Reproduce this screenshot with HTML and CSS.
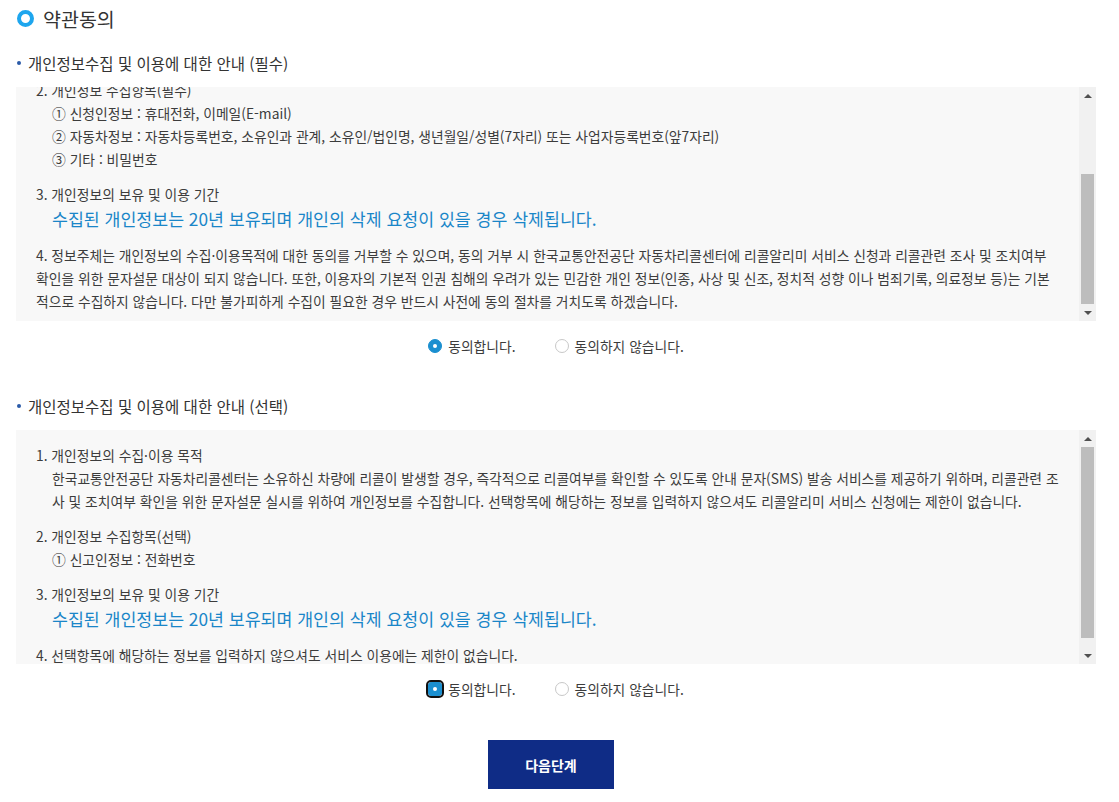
FILE: index.html
```html
<!DOCTYPE html>
<html lang="ko">
<head>
  <meta charset="UTF-8" />
  <meta name="viewport" content="width=device-width, initial-scale=1.0"/>
  <title>약관동의</title>
  <link rel="stylesheet" href="styles.css">
</head>
<body>

  <div class="page">
    <h2 class="page-title"><span class="title-icon"></span>약관동의</h2>

    <h3 class="section-head">개인정보수집 및 이용에 대한 안내 (필수)</h3>
    <div class="terms-box">
      <div class="terms-scroll" id="terms1" data-scroll="end">
        <div class="term-item">
          <p class="term-title">1. 개인정보의 수집·이용 목적</p>
          <p class="term-desc">한국교통안전공단 자동차리콜센터는 리콜알리미 서비스 신청자에게 소유하신 차량에 리콜이 발생할 경우, 즉각적으로 리콜여부를 확인할 수 있도록 안내 문자(SMS) 발송 서비스를 제공하고, 리콜관련 조사 및 조치여부 확인을 위한 문자설문 실시를 위하여 개인정보를 수집합니다. 수집된 개인정보는 위 목적 이외의 용도로는 이용되지 않으며, 이용 목적이 변경될 경우에는 사전에 동의를 구할 예정입니다. 또한 신청인의 본인 확인 및 서비스 이용 내역 관리, 민원 처리 등을 위하여 필요한 최소한의 정보만을 수집합니다.</p>
        </div>
        <div class="term-item">
          <p class="term-title">2. 개인정보 수집항목(필수)</p>
          <p class="term-desc">① 신청인정보 : 휴대전화, 이메일(E-mail)</p>
          <p class="term-desc">② 자동차정보 : 자동차등록번호, 소유인과 관계, 소유인/법인명, 생년월일/성별(7자리) 또는 사업자등록번호(앞7자리)</p>
          <p class="term-desc">③ 기타 : 비밀번호</p>
        </div>
        <div class="term-item">
          <p class="term-title">3. 개인정보의 보유 및 이용 기간</p>
          <p class="term-desc term-point">수집된 개인정보는 20년 보유되며 개인의 삭제 요청이 있을 경우 삭제됩니다.</p>
        </div>
        <div class="term-item">
          <p class="term-title term-narrow">4. 정보주체는 개인정보의 수집·이용목적에 대한 동의를 거부할 수 있으며, 동의 거부 시 한국교통안전공단 자동차리콜센터에 리콜알리미 서비스 신청과 리콜관련 조사 및 조치여부 확인을 위한 문자설문 대상이 되지 않습니다. 또한, 이용자의 기본적 인권 침해의 우려가 있는 민감한 개인 정보(인종, 사상 및 신조, 정치적 성향 이나 범죄기록, 의료정보 등)는 기본적으로 수집하지 않습니다. 다만 불가피하게 수집이 필요한 경우 반드시 사전에 동의 절차를 거치도록 하겠습니다.</p>
        </div>
      </div>
      <div class="scrollbar">
        <span class="scroll-btn up"></span>
        <div class="scroll-track"><div class="scroll-thumb"></div></div>
        <span class="scroll-btn down"></span>
      </div>
    </div>
    <div class="agree-row">
      <label class="agree-option"><input type="radio" name="agree1" checked> 동의합니다.</label>
      <label class="agree-option"><input type="radio" name="agree1"> 동의하지 않습니다.</label>
    </div>

    <h3 class="section-head section-gap">개인정보수집 및 이용에 대한 안내 (선택)</h3>
    <div class="terms-box">
      <div class="terms-scroll" id="terms2">
        <div class="term-item">
          <p class="term-title">1. 개인정보의 수집·이용 목적</p>
          <p class="term-desc">한국교통안전공단 자동차리콜센터는 소유하신 차량에 리콜이 발생할 경우, 즉각적으로 리콜여부를 확인할 수 있도록 안내 문자(SMS) 발송 서비스를 제공하기 위하며, 리콜관련 조사 및 조치여부 확인을 위한 문자설문 실시를 위하여 개인정보를 수집합니다. 선택항목에 해당하는 정보를 입력하지 않으셔도 리콜알리미 서비스 신청에는 제한이 없습니다.</p>
        </div>
        <div class="term-item">
          <p class="term-title">2. 개인정보 수집항목(선택)</p>
          <p class="term-desc">① 신고인정보 : 전화번호</p>
        </div>
        <div class="term-item">
          <p class="term-title">3. 개인정보의 보유 및 이용 기간</p>
          <p class="term-desc term-point">수집된 개인정보는 20년 보유되며 개인의 삭제 요청이 있을 경우 삭제됩니다.</p>
        </div>
        <div class="term-item">
          <p class="term-title">4. 선택항목에 해당하는 정보를 입력하지 않으셔도 서비스 이용에는 제한이 없습니다.</p>
        </div>
      </div>
      <div class="scrollbar">
        <span class="scroll-btn up"></span>
        <div class="scroll-track"><div class="scroll-thumb"></div></div>
        <span class="scroll-btn down"></span>
      </div>
    </div>
    <div class="agree-row">
      <label class="agree-option"><input type="radio" name="agree2" class="focused" checked> 동의합니다.</label>
      <label class="agree-option"><input type="radio" name="agree2"> 동의하지 않습니다.</label>
    </div>

    <div class="btn-area">
      <button class="next-btn">다음단계</button>
    </div>
  </div>

  <script>
    // fake scrollbars: size the thumb from the content height
    document.querySelectorAll('.terms-box').forEach(function (box) {
      const scroll = box.querySelector('.terms-scroll');
      const track = box.querySelector('.scroll-track');
      const thumb = box.querySelector('.scroll-thumb');

      if (scroll.dataset.scroll === 'end') {
        scroll.scrollTop = scroll.scrollHeight;
      }

      const ratio = scroll.clientHeight / scroll.scrollHeight;
      const trackH = track.clientHeight;
      const thumbH = Math.round(trackH * ratio);
      const maxScroll = scroll.scrollHeight - scroll.clientHeight;
      const top = maxScroll > 0 ? Math.round((trackH - thumbH) * scroll.scrollTop / maxScroll) : 0;

      thumb.style.height = thumbH + 'px';
      thumb.style.marginTop = top + 'px';
    });
  </script>

</body>
</html>
```

FILE: styles.css
```css
body {
  font-family: "Noto Sans CJK KR", "Noto Sans", sans-serif;
  margin: 0;
  padding: 0;
  background-color: #fff;
  color: #333;
}

p {
  margin: 0;
}

.page {
  width: 1080px;
  padding: 0 23px 0 16px;
}

.page-title {
  display: flex;
  align-items: center;
  gap: 9px;
  margin: 0;
  height: 36px;
  font-size: 19.5px;
  font-weight: normal;
  color: #333;
}

.title-icon {
  width: 9px;
  height: 9px;
  margin-left: 1px;
  border: 4px solid #1ea6ee;
  border-radius: 50%;
}

.section-head {
  display: flex;
  align-items: center;
  margin: 15px 0 12px;
  height: 24px;
  font-size: 15.5px;
  font-weight: normal;
  color: #333;
}

.section-head::before {
  content: "";
  width: 4px;
  height: 4px;
  margin: 0 7px 0 1px;
  border-radius: 50%;
  background-color: #2a5aa8;
}

.section-gap {
  margin-top: 38px;
}

.terms-box {
  display: flex;
  height: 234px;
  background-color: #f8f8f8;
}

.terms-scroll {
  flex: 1;
  overflow: hidden;
  padding: 14px 9px 8px 20px;
  font-size: 13.8px;
  line-height: 23px;
  color: #3c3c3c;
}

.term-item + .term-item {
  margin-top: 12px;
}

.term-narrow {
  padding-right: 12px;
}

.term-desc {
  padding-left: 16px;
}

.term-point {
  font-size: 17.3px;
  line-height: 26px;
  color: #1a86c8;
}

.scrollbar {
  display: flex;
  flex-direction: column;
  width: 17px;
  background-color: #f1f1f1;
}

.scroll-btn {
  height: 17px;
  display: flex;
  align-items: center;
  justify-content: center;
}

.scroll-btn::before {
  content: "";
  border-left: 4px solid transparent;
  border-right: 4px solid transparent;
}

.scroll-btn.up::before {
  border-bottom: 4px solid #505050;
}

.scroll-btn.down::before {
  border-top: 4px solid #505050;
}

.scroll-track {
  flex: 1;
  padding: 0 2px;
}

.scroll-thumb {
  background-color: #bdbdbd;
}

.agree-row {
  display: flex;
  justify-content: center;
  gap: 39px;
  margin-top: 15px;
  height: 20px;
  line-height: 20px;
  font-size: 13.8px;
  color: #3c3c3c;
}

.agree-option {
  display: flex;
  align-items: center;
  gap: 6px;
  cursor: pointer;
}

.agree-option input {
  appearance: none;
  -webkit-appearance: none;
  width: 14px;
  height: 14px;
  margin: 0;
  border: 1px solid #c8c8c8;
  border-radius: 50%;
  background-color: #fff;
  position: relative;
  cursor: pointer;
}

.agree-option input:checked {
  border-color: #1a8fd0;
  background-color: #1a8fd0;
}

.agree-option input:checked::after {
  content: "";
  position: absolute;
  top: 4px;
  left: 4px;
  width: 4px;
  height: 4px;
  border-radius: 50%;
  background-color: #fff;
}

.agree-option input.focused {
  outline: 2px solid #111;
  outline-offset: 0;
  border-radius: 3px;
}

.btn-area {
  display: flex;
  justify-content: center;
  margin-top: 41px;
  padding-right: 10px;
}

.next-btn {
  width: 126px;
  height: 49px;
  border: none;
  background-color: #0f2c86;
  color: #fff;
  font-family: inherit;
  font-size: 14px;
  font-weight: bold;
  cursor: pointer;
}
```
